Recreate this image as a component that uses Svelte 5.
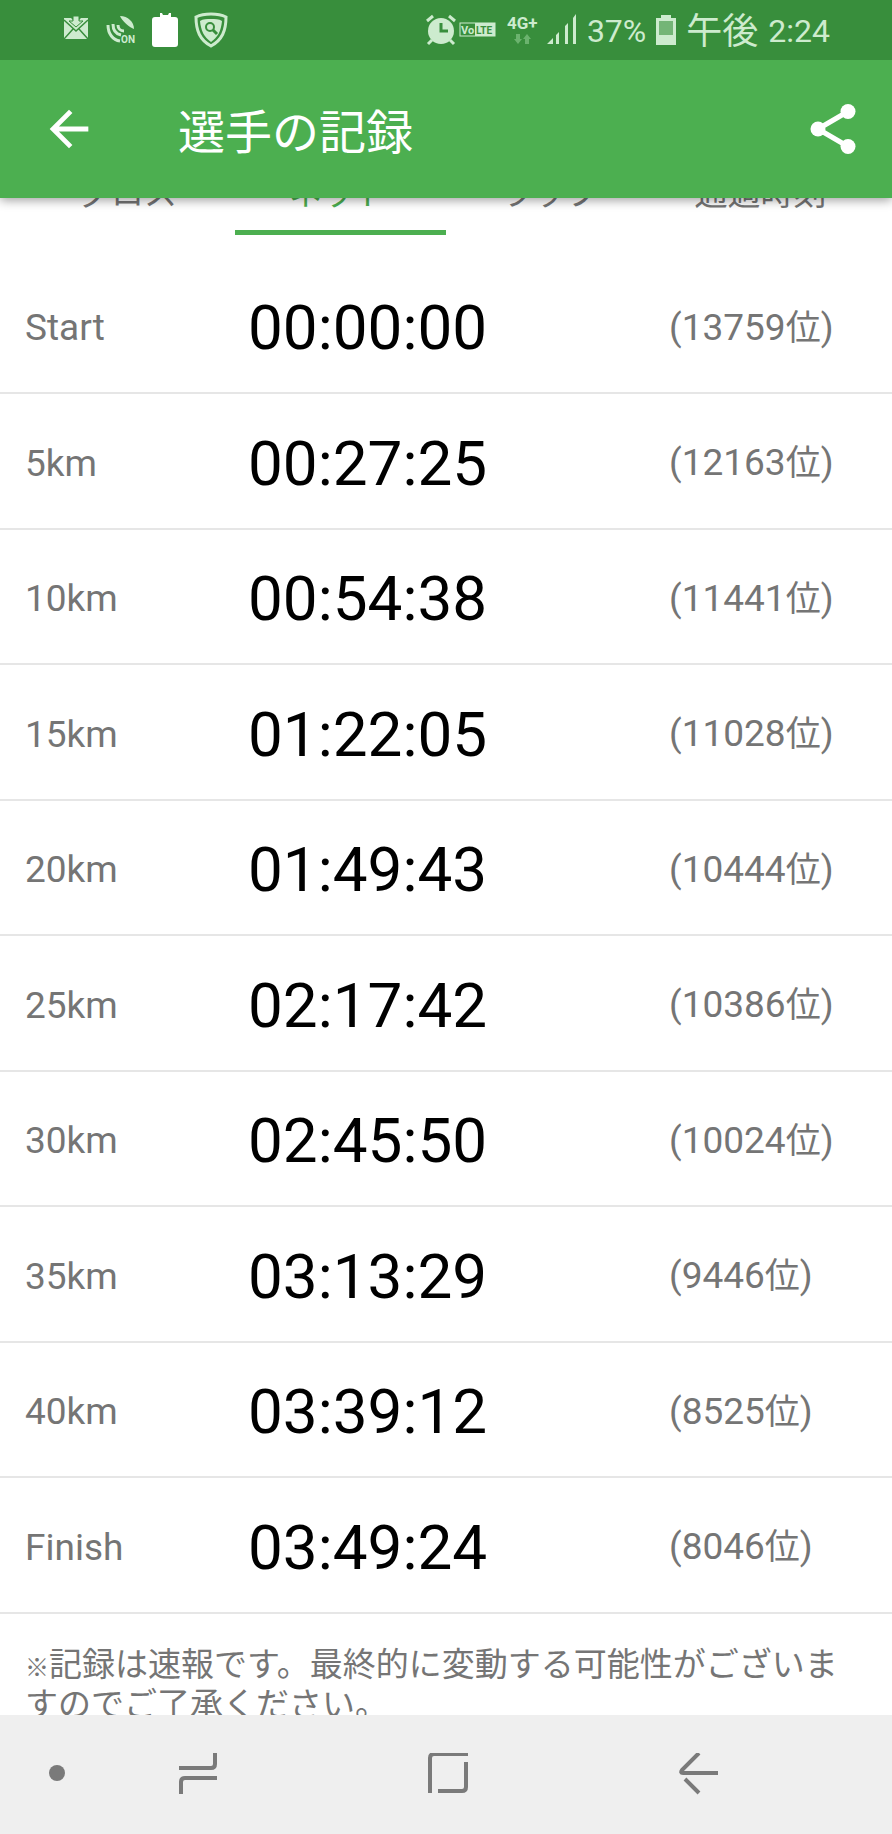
<script lang="ts">
  interface Split {
    point: string
    time: string
    rank: number
  }

  const tabs = ['グロス', 'ネット', 'ラップ', '通過時刻']
  let active = $state('ネット')

  const splits: Split[] = [
    { point: 'Start', time: '00:00:00', rank: 13759 },
    { point: '5km', time: '00:27:25', rank: 12163 },
    { point: '10km', time: '00:54:38', rank: 11441 },
    { point: '15km', time: '01:22:05', rank: 11028 },
    { point: '20km', time: '01:49:43', rank: 10444 },
    { point: '25km', time: '02:17:42', rank: 10386 },
    { point: '30km', time: '02:45:50', rank: 10024 },
    { point: '35km', time: '03:13:29', rank: 9446 },
    { point: '40km', time: '03:39:12', rank: 8525 },
    { point: 'Finish', time: '03:49:24', rank: 8046 },
  ]
</script>

<div class="screen">
  <div class="status">
    <div class="notices">
      <svg width="27" height="36" viewBox="0 0 27 36">
        <path d="M0 6h7l5 5 5-5h7v21H0z" fill="currentColor" />
        <path d="M9 4h6v5h4l-7 6-7-6h4z" fill="currentColor" stroke="#388e3c" stroke-width="1" />
        <path d="M0 8l12 11L24 8M0 27l9-10M24 27l-9-10" fill="none" stroke="#388e3c" stroke-width="1.5" />
      </svg>
      <svg width="30" height="36" viewBox="0 0 30 36">
        <g fill="none" stroke="currentColor" stroke-width="3">
          <path d="M2 13c0 9 5 15 12 16" />
          <path d="M7 12c0 6 3 10 8 11" />
          <path d="M12 13c0 3 2 6 6 6" />
        </g>
        <path d="M14 4c8 0 14 6 14 13-4-1-12-8-14-13z" fill="currentColor" />
        <text x="15" y="31" font-size="10" font-weight="700" fill="currentColor">ON</text>
      </svg>
      <svg width="28" height="36" viewBox="0 0 28 36">
        <path d="M9 1h2l1 2h5l1-2h2v4h4q3 0 3 3v24q0 3-3 3H4q-3 0-3-3V8q0-3 3-3h5z" fill="#fff" />
      </svg>
      <svg width="34" height="36" viewBox="0 0 34 36">
        <path d="M17 2c5 0 11 1 15 3 0 14-4 23-15 29C6 28 2 19 2 5c4-2 10-3 15-3z" fill="none" stroke="currentColor" stroke-width="3" />
        <path d="M17 7c4 0 8 0 11 2-1 10-4 16-11 21C10 25 7 19 6 9c3-2 7-2 11-2z" fill="currentColor" />
        <circle cx="16" cy="15" r="4" fill="none" stroke="#388e3c" stroke-width="2" />
        <path d="M19 18l4 4" stroke="#388e3c" stroke-width="3" />
      </svg>
    </div>
    <div class="system">
      <div class="pair">
        <svg width="30" height="36" viewBox="0 0 30 36">
          <circle cx="15" cy="19" r="13" fill="currentColor" />
          <path d="M1 9l6-5M23 4l6 5M6 28l-4 4M24 28l4 4" stroke="currentColor" stroke-width="3" />
          <path d="M15 11v8h7" fill="none" stroke="#388e3c" stroke-width="3" />
        </svg>
        <svg width="38" height="36" viewBox="0 0 38 36">
          <rect x="1" y="11" width="35" height="13" fill="none" stroke="currentColor" stroke-width="1" />
          <rect x="16" y="11" width="20" height="13" fill="currentColor" />
          <text x="2" y="22" font-size="11" font-weight="700" fill="currentColor">Vo</text>
          <text x="17" y="22" font-size="10" font-weight="700" fill="#388e3c">LTE</text>
        </svg>
      </div>
      <svg class="net" width="30" height="36" viewBox="0 0 30 36">
        <text x="0" y="17" font-size="17" font-weight="700" fill="currentColor">4G+</text>
        <path d="M9 22h4v5h2l-4 5-4-5h2zM18 32h4v-5h2l-4-5-4 5h2z" fill="#6bb36e" />
      </svg>
      <svg width="30" height="36" viewBox="0 0 30 36" fill="currentColor">
        <path d="M0 32l6-6v6zM9 23l3-3v12H9zM18 14l3-3v21h-3zM26 6l3-4v30h-3z" />
      </svg>
      <span>37%</span>
      <svg width="20" height="36" viewBox="0 0 20 36">
        <path d="M5 3h10v3h5v27H0V6h5z" fill="currentColor" />
        <path d="M3 9h14v14H3z" fill="#74b577" />
      </svg>
      <span class="ampm">午後</span>
      <span>2:24</span>
    </div>
  </div>

  <header>
    <button class="icon" aria-label="戻る">
      <svg width="58" height="58" viewBox="0 0 24 24" fill="currentColor">
        <path d="M20 11H7.83l5.59-5.59L12 4l-8 8 8 8 1.41-1.41L7.83 13H20v-2z" />
      </svg>
    </button>
    <h1>選手の記録</h1>
    <button class="icon" aria-label="共有">
      <svg width="60" height="60" viewBox="0 0 24 24" fill="currentColor">
        <path d="M6 12L18 5M6 12l12 7" stroke="currentColor" stroke-width="2" />
        <circle cx="6" cy="12" r="3" />
        <circle cx="18" cy="5" r="3" />
        <circle cx="18" cy="19" r="3" />
      </svg>
    </button>
  </header>

  <main>
    <div class="tabs" role="tablist">
      {#each tabs as tab (tab)}
        <button
          role="tab"
          class:active={tab === active}
          aria-selected={tab === active}
          onclick={() => (active = tab)}
        >{tab}</button>
      {/each}
    </div>

    <table>
      <tbody>
        {#each splits as s (s.point)}
          <tr>
            <th scope="row">{s.point}</th>
            <td class="time">{s.time}</td>
            <td class="rank">({s.rank}<span class="unit">位</span>)</td>
          </tr>
        {/each}
      </tbody>
    </table>

    <p><span class="mark">※</span>記録は速報です。最終的に変動する可能性がございますのでご了承ください。</p>
  </main>

  <nav>
    <button class="dot" aria-label="ナビゲーションバーを隠す">
      <svg width="32" height="44" viewBox="0 0 32 44"><circle cx="16" cy="20" r="8" fill="currentColor" /></svg>
    </button>
    <button aria-label="履歴">
      <svg width="44" height="44" viewBox="0 2 44 44">
        <path d="M3 17h32q4 0 4-4V0M41 27H9q-4 0-4 4v12" />
      </svg>
    </button>
    <button aria-label="ホーム">
      <svg width="44" height="44" viewBox="0 2 44 44">
        <path d="M4 42V7q0-4 4-4h34M40 11v25q0 4-4 4H12" />
      </svg>
    </button>
    <button aria-label="戻る">
      <svg width="44" height="44" viewBox="-1 2 44 44">
        <path d="M22 2L5 19q-2 3 1 3h35M8 28l14 14" />
      </svg>
    </button>
  </nav>
</div>

<style>
  :global(body) {
    margin: 0;
    background: #fff;
  }
  .screen {
    display: flex;
    flex-direction: column;
    height: 100vh;
    font-family: Roboto, "Noto Sans CJK JP", sans-serif;
    color: #757575;
  }
  svg {
    display: block;
    flex-shrink: 0;
  }
  button {
    display: flex;
    align-items: center;
    justify-content: center;
    padding: 0;
    border: none;
    background: none;
    color: inherit;
    font: inherit;
    cursor: pointer;
  }

  .status {
    position: relative;
    z-index: 2;
    display: flex;
    flex-shrink: 0;
    align-items: center;
    justify-content: space-between;
    height: 60px;
    padding: 0 62px 0 64px;
    box-sizing: border-box;
    background: #388e3c;
    color: #cdebce;
    font-size: 32px;
    line-height: 36px;
  }
  .notices {
    display: flex;
    gap: 15px;
  }
  .system {
    display: flex;
    align-items: center;
    gap: 10px;
  }
  .pair {
    display: flex;
    gap: 3px;
  }
  .net {
    overflow: visible;
  }
  .system span {
    padding-top: 2px;
  }
  .system .ampm {
    padding-top: 4px;
    font-size: 36px;
  }

  header {
    position: relative;
    z-index: 1;
    display: flex;
    flex-shrink: 0;
    align-items: center;
    height: 138px;
    padding: 0 29px 0 40px;
    background: #4caf50;
    color: #fff;
    box-shadow: 0 2px 10px rgba(0, 0, 0, 0.4);
  }
  h1 {
    flex: 1;
    margin: 0 0 0 80px;
    padding-top: 8px;
    font-size: 47px;
    font-weight: 400;
    line-height: 56px;
  }

  main {
    flex: 1;
    min-height: 0;
    overflow: hidden;
  }
  /* partly scrolled away under the header */
  .tabs {
    display: flex;
    height: 88px;
    margin: -51px 24px 24px;
  }
  .tabs button {
    flex: 1;
    box-sizing: border-box;
    padding-right: 4px;
    border-top: 5px solid transparent;
    border-bottom: 5px solid transparent;
    font-size: 33px;
  }
  .tabs .active {
    border-bottom-color: #4caf50;
    color: #4caf50;
  }

  table {
    width: 100%;
    table-layout: fixed;
    border-collapse: separate;
    border-spacing: 0;
    font-size: 37px;
    line-height: 48px;
  }
  tr {
    height: 135px;
  }
  tr:nth-child(even) {
    height: 136px;
  }
  th,
  td {
    padding: 5px 0 0;
    border-bottom: 2px solid #e6e6e6;
    text-align: left;
    font-weight: 400;
    vertical-align: middle;
  }
  th {
    width: 25%;
    box-sizing: border-box;
    padding-left: 25px;
  }
  .time {
    width: 50%;
    box-sizing: border-box;
    padding-left: 25px;
    color: #000;
    font-size: 62px;
  }
  .unit {
    font-size: 35px;
  }

  p {
    margin: 31px 25px 0;
    font-size: 33px;
    line-height: 40px;
  }
  .mark {
    font-size: 24px;
    font-weight: 700;
    line-height: 24px;
  }

  nav {
    display: grid;
    grid-template-columns: 73px 1fr 1fr 1fr;
    flex-shrink: 0;
    height: 119px;
    padding-right: 69px;
    background: #efefef;
    color: #7a7a7a;
  }
  nav .dot {
    justify-content: flex-end;
  }
  nav path {
    fill: none;
    stroke: currentColor;
    stroke-width: 4;
  }
</style>
